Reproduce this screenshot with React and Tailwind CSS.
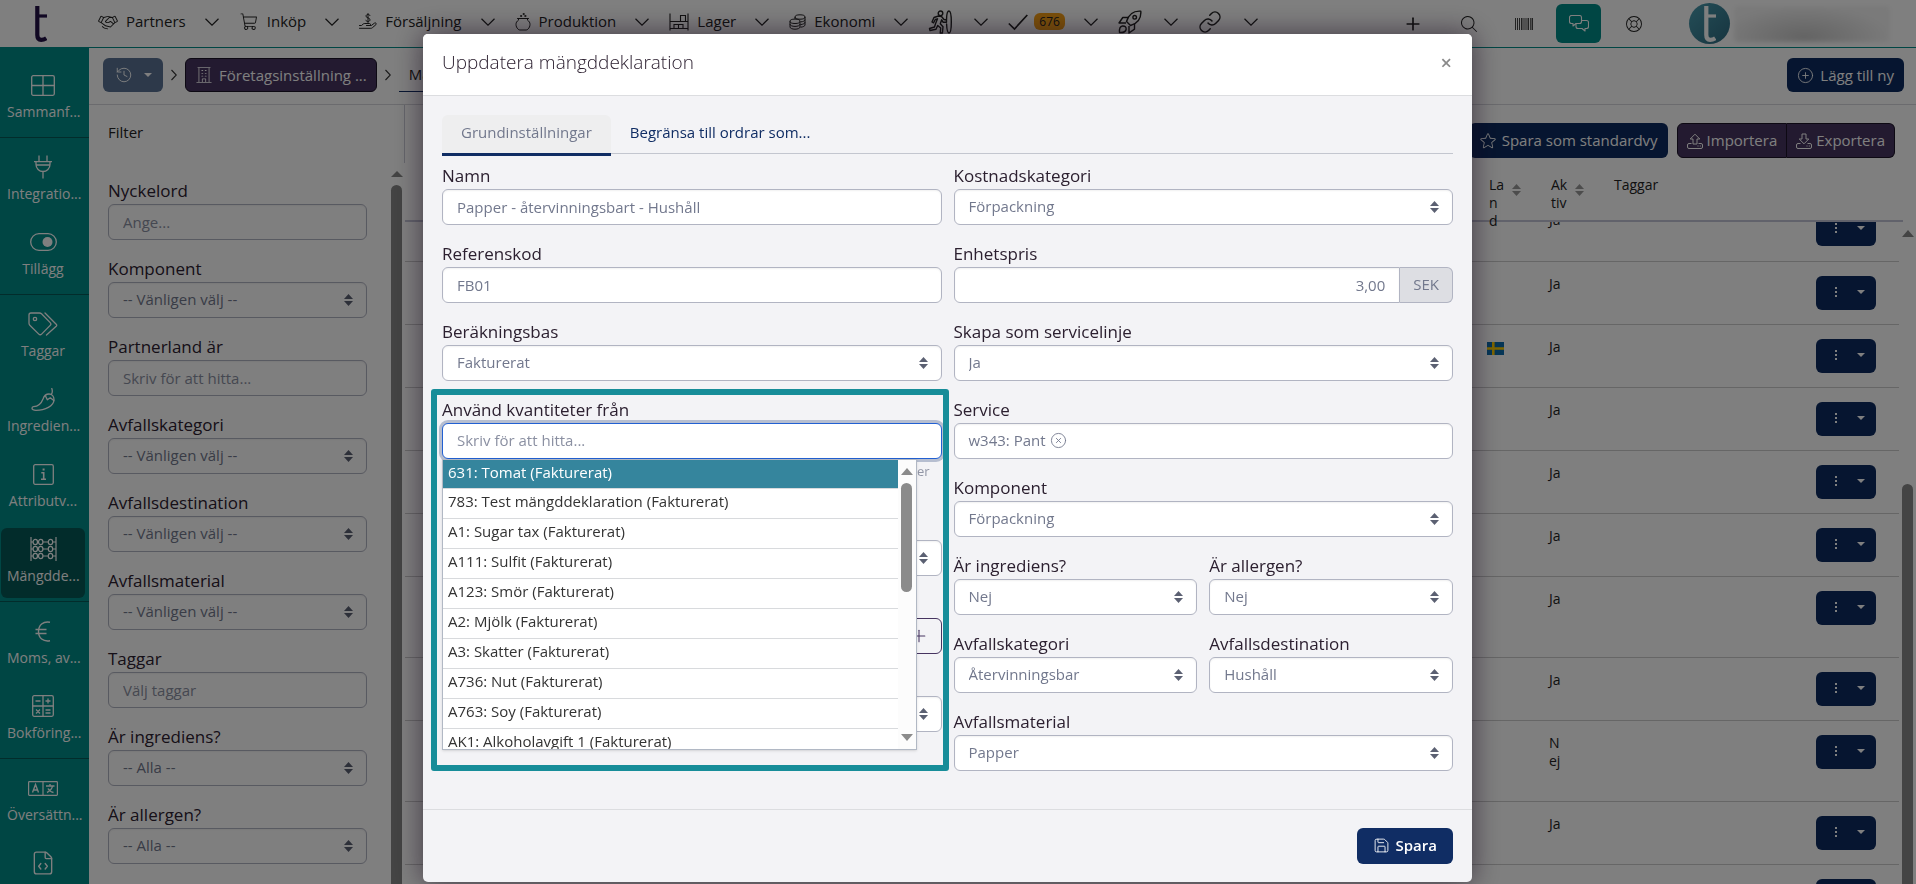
import React from 'react'
import {
    PiHandshakeLight, PiShoppingCartLight, PiBuildingLight, PiStarLight,
    PiLifebuoyLight, PiMagnifyingGlassLight,
} from 'react-icons/pi'
import { Link, Save, CirclePlus, CircleX, FileCode, Plus, History } from 'lucide-react'
import clsx from 'clsx'

const navItems = [
    { label: 'Partners', icon: <PiHandshakeLight className="w-5 h-5" /> },
    { label: 'Inköp', icon: <PiShoppingCartLight className="w-5 h-5" /> },
    { label: 'Försäljning', icon: <HandDollarIcon /> },
    { label: 'Produktion', icon: <PotIcon /> },
    { label: 'Lager', icon: <ShelfIcon /> },
    { label: 'Ekonomi', icon: <CoinsIcon /> },
    { name: 'CRM', icon: <SurferIcon /> },
    { name: 'Uppgifter', icon: <CheckIcon />, badge: '676' },
    { name: 'Start', icon: <RocketIcon /> },
    { name: 'Länkar', icon: <Link className="w-6 h-6" strokeWidth={1.5} /> },
]

const sideGroups = [
    [{ label: 'Sammanf...', icon: <GridIcon /> }],
    [
        { label: 'Integratio...', icon: <PlugIcon /> },
        { label: 'Tillägg', icon: <ToggleIcon /> },
    ],
    [
        { label: 'Taggar', icon: <TagsIcon /> },
        { label: 'Ingredien...', icon: <PepperIcon /> },
        { label: 'Attributv...', icon: <InfoIcon /> },
        { label: 'Mängdde...', icon: <AbacusIcon />, active: true },
    ],
    [
        { label: 'Moms, av...', icon: <EuroIcon /> },
        { label: 'Bokföring...', icon: <CalcIcon /> },
    ],
    [
        { label: 'Översättn...', icon: <TranslateIcon /> },
        { name: 'Kod', icon: <FileCode className="w-[26px] h-[26px]" strokeWidth={1.25} /> },
    ],
]

const filters = [
    { label: 'Nyckelord', placeholder: 'Ange...' },
    { label: 'Komponent', value: '-- Vänligen välj --' },
    { label: 'Partnerland är', placeholder: 'Skriv för att hitta...' },
    { label: 'Avfallskategori', value: '-- Vänligen välj --' },
    { label: 'Avfallsdestination', value: '-- Vänligen välj --' },
    { label: 'Avfallsmaterial', value: '-- Vänligen välj --' },
    { label: 'Taggar', placeholder: 'Välj taggar' },
    { label: 'Är ingrediens?', value: '-- Alla --' },
    { label: 'Är allergen?', value: '-- Alla --' },
]

const rows = [
    { active: 'Ja' },
    { active: 'Ja' },
    { active: 'Ja', flag: true },
    { active: 'Ja' },
    { active: 'Ja' },
    { active: 'Ja' },
    { active: 'Ja', tall: true },
    { active: 'Ja' },
    { active: 'Nej', tall: true },
    { active: 'Ja' },
    { active: '' },
]

const options = [
    '631: Tomat (Fakturerat)',
    '783: Test mängddeklaration (Fakturerat)',
    'A1: Sugar tax (Fakturerat)',
    'A111: Sulfit (Fakturerat)',
    'A123: Smör (Fakturerat)',
    'A2: Mjölk (Fakturerat)',
    'A3: Skatter (Fakturerat)',
    'A736: Nut (Fakturerat)',
    'A763: Soy (Fakturerat)',
    'AK1: Alkoholavgift 1 (Fakturerat)',
]

/* ---------- Icons ---------- */

function HandDollarIcon() {
    return (
        <svg className="w-[18px] h-[18px]" viewBox="0 0 18 18" fill="none" stroke="currentColor" strokeWidth="1" strokeLinecap="round" strokeLinejoin="round">
            <path d="M9 0.5v9M11 2.6C10.6 1.8 9.9 1.5 9 1.5c-1.200 0-2 .6-2 1.600 0 2.300 4 1.200 4 3.700 0 1-.9 1.700-2 1.700-1 0-1.800-.4-2.200-1.300" />
            <path d="M.5 12.500h2L4.200 11c.5-.4 1-.5 1.600-.5h4.700c1.300 0 1.300 2 0 2H7.500M10.500 12.500h1.800l3.200-2.400c1.200-.8 2.400.6 1.400 1.600l-3.500 3c-.5.5-1 .6-1.600.6H.5" />
        </svg>
    )
}

function PotIcon() {
    return (
        <svg className="w-4 h-[18px]" viewBox="0 0 16 18" fill="none" stroke="currentColor" strokeWidth="1" strokeLinecap="round">
            <path d="M2.500 5.500h11M3.500 5.500v1.700C1.700 8.300 1 9.700 1 11.500c0 1.800.8 3.500 2 4.500.5.700 1 1 1.800 1h6.400c.8 0 1.300-.3 1.800-1 1.200-1 2-2.700 2-4.500 0-1.800-.7-3.200-2.500-4.300V5.500" />
            <circle cx="6" cy="3" r=".6" />
            <circle cx="8.500" cy="1" r=".6" />
            <circle cx="10.200" cy="3" r=".6" />
        </svg>
    )
}

function ShelfIcon() {
    return (
        <svg className="w-5 h-[18px]" viewBox="0 0 20 18" fill="none" stroke="currentColor" strokeWidth="1.1">
            <path d="M1 .5v17M19 .5v17M1 8.500h18M1 15.500h18M11.500 8.500v-6h5v6M5 15.500v-4h9v4M9.500 11.500v4" />
        </svg>
    )
}

function CoinsIcon() {
    return (
        <svg className="w-[17px] h-4" viewBox="0 0 17 16" fill="none" stroke="currentColor" strokeWidth="1">
            <ellipse cx="11" cy="3" rx="5" ry="2.200" />
            <path d="M6 3v2M16 3v8c0 1-1.800 2-4.500 2.200M16 5.700c0 1.100-1.800 2-4.300 2.200M16 8.300c0 1.100-1.800 2-4.500 2.300" />
            <ellipse cx="6" cy="7.300" rx="5" ry="2.200" />
            <path d="M1 7.300v5.700c0 1.200 2.200 2.200 5 2.200s5-1 5-2.200V7.300M1 10.200c0 1.200 2.200 2.200 5 2.200s5-1 5-2.200" />
        </svg>
    )
}

function SurferIcon() {
    return (
        <svg className="w-6 h-6" viewBox="0 0 24 24" fill="none" stroke="currentColor" strokeWidth="1.400" strokeLinecap="round" strokeLinejoin="round">
            <circle cx="12.500" cy="3.300" r="2.300" />
            <path d="M10.500 6 6 7.500 4 12l1.500.8L7.300 9.500l2.200-.7-2 5L6.500 17 1.500 18.500l.5 2 6-1.300 1.700-3.700 3 2.500-.5 5h2.200l.6-6.200-2.700-3 1.400-4 1.500 2.500h3.300V10l-2.500-.5L13.500 6.500z" />
            <path d="M18.500 9.500C18.600 4.500 19.700 1 21 1c1.500 0 2.300 5 2.300 11s-.8 11-2.300 11c-1.300 0-2.200-4-2.400-9" />
        </svg>
    )
}

function RocketIcon() {
    return (
        <svg className="w-6 h-6" viewBox="0 0 24 24" fill="none" stroke="currentColor" strokeWidth="1.400" strokeLinejoin="round">
            <path d="M8.500 11.500C10.500 5 15 .6 22.800 1.200 23.400 9 19 13.500 12.500 15.500z" />
            <circle cx="16.700" cy="7.300" r="1.800" />
            <path d="M10.200 7.500H4.800L1 13h7M16.500 13.800v5.400L11 23v-7" />
            <path d="M1.500 22.500c-.3-4 .7-6.200 3-6.500 2.500-.2 4 1.300 3.600 3.500-.4 2.300-2.600 3.300-6.600 3z" />
        </svg>
    )
}

function CheckIcon() {
    return (
        <svg className="w-5 h-5" viewBox="0 0 20 20" fill="none" stroke="currentColor" strokeWidth="1.700">
            <path d="M.8 11.500 6.500 17 19.300 3" />
        </svg>
    )
}

function BarcodeIcon() {
    return (
        <svg className="w-[18px] h-3" viewBox="0 0 18 12" fill="#444">
            <path d="M0 0h1v12H0zM2 0h1v12H2zM4 0h1v12H4zM6 0h1.500v12H6zM8.500 0h1v12h-1zM10.500 0h1v12h-1zM12.500 0h1.500v12h-1.500zM15 0h.8v12H15zM16.500 0H18v12h-1.500z" />
        </svg>
    )
}

function ChatIcon() {
    return (
        <svg className="w-5 h-[17px]" viewBox="0 0 20 17" fill="none" stroke="currentColor" strokeWidth="1.100" strokeLinejoin="round">
            <path d="M7 8.500 4 11V8.500H2.500a2 2 0 0 1-2-2v-4a2 2 0 0 1 2-2h8a2 2 0 0 1 2 2v4a2 2 0 0 1-2 2z" />
            <path d="M12.500 5.500h5a2 2 0 0 1 2 2v4a2 2 0 0 1-2 2H16V16l-3-2.500H9a2 2 0 0 1-2-2v-3" />
        </svg>
    )
}

function GridIcon() {
    return (
        <svg className="w-6 h-[21px]" viewBox="0 0 24 21" fill="none" stroke="currentColor" strokeWidth="1.300">
            <rect x=".7" y=".7" width="22.600" height="19.600" rx="1.500" />
            <path d="M12 .7v19.600M.7 10.500h22.600" />
        </svg>
    )
}

function PlugIcon() {
    return (
        <svg className="w-[18px] h-6" viewBox="0 0 18 24" fill="none" stroke="currentColor" strokeWidth="1.300">
            <path d="M5 .5v6M13 .5v6M0 6.700h18M2 6.700v2.800a7 7 0 0 0 14 0V6.700M2 10h14M9 16.500V23.500" />
        </svg>
    )
}

function ToggleIcon() {
    return (
        <svg className="w-[27px] h-[18px]" viewBox="0 0 27 18" fill="none" stroke="currentColor" strokeWidth="1.300">
            <rect x=".7" y=".7" width="25.600" height="16.600" rx="8.300" />
            <circle cx="17.500" cy="9" r="5" fill="currentColor" stroke="none" />
        </svg>
    )
}

function TagsIcon() {
    return (
        <svg className="w-[30px] h-6" viewBox="0 0 30 24" fill="none" stroke="currentColor" strokeWidth="1.300" strokeLinecap="round">
            <path d="M1 3a2 2 0 0 1 2-2h8.500c.8 0 1.500.3 2 .8l8.700 8.800c.8.8.8 2 0 2.800l-8.600 8.700c-.8.8-2 .8-2.800 0L1.800 13.300c-.5-.5-.8-1.200-.8-2z" />
            <path d="M17 1l11.200 11.200c.6.6.6 1.400 0 2L18.500 23" />
            <circle cx="7" cy="7" r="1.700" />
        </svg>
    )
}

function PepperIcon() {
    return (
        <svg className="w-6 h-[23px]" viewBox="0 0 24 23" fill="none" stroke="currentColor" strokeWidth="1.300" strokeLinejoin="round" strokeLinecap="round">
            <path d="M1 20.300c0-1 .6-1.500 1.500-1.600 5.500-.4 8-3.700 9.500-7.700C13 8 15 6 18 6s5 2.500 5 5.500c0 6.500-9 10.800-18 10.800-2.500 0-4-.8-4-2z" />
            <path d="M20.500 6.200c1-1.700 1-3.700.3-5.700M14.500 8l1.800 3.800 3-2 3.500 2.700" />
        </svg>
    )
}

function InfoIcon() {
    return (
        <svg className="w-[21px] h-[21px]" viewBox="0 0 21 21" fill="none" stroke="currentColor" strokeWidth="1.300">
            <rect x=".7" y=".7" width="19.600" height="19.600" rx="1.500" />
            <path d="M8.300 8.700h2.400v6.500M8 15.300h5" strokeWidth="1.600" />
            <path d="M9.600 4.500h2v2h-2z" fill="currentColor" stroke="none" />
        </svg>
    )
}

function AbacusIcon() {
    return (
        <svg className="w-[27px] h-6" viewBox="0 0 27 24" fill="none" stroke="currentColor" strokeWidth="1.200">
            <path d="M1 0v24M26 0v24M1 5h2M13 5h5M23 5h3M1 12h2M13 12h5M23 12h3M1 19h2M13 19h5M23 19h3" />
            {[5, 12, 19].map((y) => [5.3, 10.7, 20.5].map((x) => (
                <ellipse key={`${x}-${y}`} cx={x} cy={y} rx="2.200" ry="2.600" />
            )))}
        </svg>
    )
}

function EuroIcon() {
    return (
        <svg className="w-4 h-[21px]" viewBox="0 0 16 21" fill="none" stroke="currentColor" strokeWidth="1.400">
            <path d="M15 1.200C8 0 3.500 4 3.500 10.500S8 21 15 19.800M.5 8.500h11M.5 12.500h11" />
        </svg>
    )
}

function CalcIcon() {
    return (
        <svg className="w-[22px] h-[22px]" viewBox="0 0 22 22" fill="none" stroke="currentColor" strokeWidth="1.300">
            <rect x=".7" y=".7" width="20.600" height="20.600" rx="1.500" />
            <path d="M11 .7v20.600M.7 11h20.600M3.500 6h5M13.500 6h5M16 3.500v5M4 14.500l4 4M8 14.500l-4 4M13.500 15h5M13.500 18h5" />
        </svg>
    )
}

function TranslateIcon() {
    return (
        <svg className="w-[30px] h-[15px]" viewBox="0 0 30 15" fill="none" stroke="currentColor" strokeWidth="1.200">
            <rect x=".6" y=".6" width="28.800" height="13.800" rx=".8" />
            <path d="M15 .6v13.800" />
            <path d="M4.500 11.500 7.500 3.500l3 8M5.500 9h4M18 5h8.500M22 3v2M19 11.500c3-1.500 5-3.500 5.500-6.500M20 7.500c1 2 3 3.500 5.500 4" strokeWidth="1.400" />
        </svg>
    )
}

function TrayIcon({ down }) {
    return (
        <svg className="w-4 h-4" viewBox="0 0 16 16" fill="none" stroke="currentColor" strokeWidth="1" strokeLinejoin="round">
            {down
                ? <path d="M6 1h4v5h2.800L8 10.800 3.200 6H6z" />
                : <path d="M6 11h4V6h2.800L8 1.200 3.200 6H6z" />}
            <path d="M4.500 10.500H2a1.500 1.500 0 0 0-1.500 1.500v2A1.500 1.500 0 0 0 2 15.500h12a1.500 1.500 0 0 0 1.500-1.500v-2a1.500 1.500 0 0 0-1.500-1.500h-2.500M10.500 13h1M12.800 13h1" />
        </svg>
    )
}

function Triangle({ up, className }) {
    return (
        <svg className={className} viewBox="0 0 12 6" fill="currentColor" preserveAspectRatio="none">
            <path d={up ? 'M0 6 6 0l6 6z' : 'M0 0h12L6 6z'} />
        </svg>
    )
}

function SortArrows({ className }) {
    return (
        <span className={clsx('flex flex-col gap-[2px]', className)}>
            <Triangle up className="w-[9px] h-[5px]" />
            <Triangle className="w-[9px] h-[5px]" />
        </span>
    )
}

function Chevron({ right }) {
    return right
        ? <svg className="w-[6px] h-3 shrink-0" viewBox="0 0 6 12" fill="none" stroke="#333" strokeWidth="1.100"><path d="M.5 1 5.300 6 .5 11" /></svg>
        : <svg className="w-[14px] h-2 shrink-0" viewBox="0 0 14 8" fill="none" stroke="currentColor" strokeWidth="1.200"><path d="M.5.8 7 7.200 13.500.8" /></svg>
}

function LogoMark({ className }) {
    return (
        <svg className={className} viewBox="0 0 12 36" fill="none" stroke="currentColor">
            <path d="M2.300 0v29c0 3.300 1.200 4.800 3.800 4.800 2 0 3.600-.5 5.200-1.600" strokeWidth="4.200" />
            <path d="M3 10h9" strokeWidth="3.200" />
        </svg>
    )
}

/* ---------- Form parts ---------- */

const box = 'w-full h-9 rounded-md border border-[#b1b4c2] bg-white px-[14px] text-[15px] text-[#72788d] placeholder-[#8b90a2] shadow-[inset_0_1px_2px_rgba(0,0,0,0.06)]'

function SelectBox({ id, value, label }) {
    return (
        <div className="relative">
            <select id={id} aria-label={label} defaultValue={value} className={clsx(box, 'block appearance-none outline-none pb-[2px]')}>
                <option>{value}</option>
            </select>
            <SortArrows className="absolute right-[14px] top-3 text-[#5b6072] pointer-events-none" />
        </div>
    )
}

function Field({ id, label, value, placeholder, input, children }) {
    return (
        <div className="w-full min-w-0">
            <label htmlFor={id} className="block mb-[2px] text-[17px] leading-[22px] text-[#2c2030]">{label}</label>
            {children || (input || placeholder
                ? <input id={id} type="text" defaultValue={value} placeholder={placeholder} className={clsx(box, 'block outline-none')} />
                : <SelectBox id={id} value={value} />)}
        </div>
    )
}

/* ---------- Page ---------- */

function TopBar() {
    return (
        <header className="h-12 shrink-0 flex items-center bg-white border-b border-[#008c88] text-[#222]">
            <a href="#" aria-label="Start" className="w-[89px] flex justify-center text-[#231046]">
                <LogoMark className="w-3 h-9 ml-[-8px]" />
            </a>
            <nav className="flex items-center gap-5 pl-[9px] h-full pb-1">
                {navItems.map((item) => (
                    <button key={item.label || item.name} aria-label={item.name} className="flex items-center">
                        {item.icon}
                        {item.label && <span className="ml-2 text-[15px]">{item.label}</span>}
                        {item.badge && <span className="ml-[6px] px-[5px] rounded-md bg-[#f7a014] text-xs leading-[17px]">{item.badge}</span>}
                        <span className={item.label || item.badge ? 'ml-[19px]' : 'ml-[22px]'}><Chevron /></span>
                    </button>
                ))}
            </nav>
            <div className="ml-auto flex items-center h-full pr-[26px]">
                <button aria-label="Lägg till" className="mr-9"><Plus className="w-5 h-5" strokeWidth={2} /></button>
                <button aria-label="Sök" className="mr-9"><PiMagnifyingGlassLight className="w-5 h-5" /></button>
                <button aria-label="Streckkod" className="mr-[23px]"><BarcodeIcon /></button>
                <button aria-label="Chatt" className="w-[45px] h-[39px] flex items-center justify-center rounded-md bg-[#008c88] text-white mr-[23px]"><ChatIcon /></button>
                <button aria-label="Hjälp" className="mr-[45px]"><PiLifebuoyLight className="w-5 h-5" /></button>
                <span className="w-[41px] h-[41px] rounded-full bg-gradient-to-br from-[#4a9db0] to-[#2d6a80] flex items-center justify-center text-white">
                    <LogoMark className="w-3 h-9" />
                </span>
                <span className="w-[156px] h-9 ml-1 rounded bg-[radial-gradient(ellipse_at_45%_85%,#c8c8c8,#f4f4f4_70%)] blur-[2px]" />
            </div>
        </header>
    )
}

function SideNav() {
    return (
        <aside className="w-[89px] shrink-0 bg-[#008c88] text-white pt-2 overflow-hidden">
            {sideGroups.map((group, i) => (
                <div key={i} className="pt-2 pb-[3px] pl-px pr-1 flex flex-col gap-[5px] border-b border-[#045856]">
                    {group.map((item) => (
                        <a key={item.label || item.name} href="#" aria-label={item.name} className={clsx('h-[70px] shrink-0 rounded-md flex flex-col items-center', item.active && 'bg-[#045856]')}>
                            <span className="h-[42px] flex items-center">{item.icon}</span>
                            {item.label && <span className="w-[72px] text-center text-[14px] leading-3 whitespace-nowrap">{item.label}</span>}
                        </a>
                    ))}
                </div>
            ))}
        </aside>
    )
}

function FilterPanel() {
    return (
        <section className="w-[316px] shrink-0 flex flex-col overflow-hidden">
            <div className="h-[58px] shrink-0 pl-[19px] pt-4 border-r border-[#c9cbd6]">
                <h2 className="text-[15px] text-[#222]">Filter</h2>
            </div>
            <div className="flex-1 flex min-h-0 pt-2">
                <div className="flex-1 flex flex-col gap-[18px] pl-[19px] pt-[9px] overflow-hidden">
                    {filters.map((f) => <div key={f.label} className="shrink-0"><Field id={`filter-${f.label}`} {...f} /></div>)}
                </div>
                <div className="w-[17px] ml-[21px] flex flex-col items-center gap-2 text-[#888]">
                    <Triangle up className="w-3 h-[6px] shrink-0" />
                    <div className="w-[11px] flex-1 rounded-t-md bg-[#888]" />
                </div>
            </div>
        </section>
    )
}

const navy = 'bg-[#0d2b60] text-white rounded-md'
const purple = 'bg-[#463460] text-white border border-[#1a1226]'

function TableCols() {
    return (
        <colgroup>
            <col />
            <col className="w-[62px]" />
            <col className="w-[63px]" />
            <col className="w-[206px]" />
            <col className="w-[83px]" />
        </colgroup>
    )
}

function Declarations() {
    return (
        <section className="flex-1 min-w-0 flex flex-col">
            <div className="flex justify-end gap-[9px] pt-[18px] pr-[21px] text-[15px]">
                <button className={clsx(navy, 'h-[35px] px-[10px] flex items-center gap-[5px]')}><PiStarLight className="w-[18px] h-[18px]" />Spara som standardvy</button>
                <div className="flex">
                    <button className={clsx(purple, 'h-[35px] px-[9px] rounded-l-md flex items-center gap-1')}><TrayIcon />Importera</button>
                    <button className={clsx(purple, 'h-[35px] px-[9px] rounded-r-md border-l-0 flex items-center gap-1')}><TrayIcon down />Exportera</button>
                </div>
            </div>
            <div className="mt-[18px] mr-[13px] h-[46px] border-b-2 border-[#c3c5d6]">
                <table className="w-full table-fixed text-[14px] leading-[18px] text-[#222]">
                    <TableCols />
                    <thead>
                        <tr className="align-top text-left">
                            <th></th>
                            <th className="font-normal"><div className="flex"><span className="w-4 break-all">Land</span><SortArrows className="ml-[7px] mt-2 text-[#999]" /></div></th>
                            <th className="font-normal"><div className="flex"><span className="w-[18px] break-all">Aktiv</span><SortArrows className="ml-[6px] mt-2 text-[#999]" /></div></th>
                            <th className="font-normal">Taggar</th>
                            <th></th>
                        </tr>
                    </thead>
                </table>
            </div>
            <div className="flex-1 min-h-0 flex overflow-hidden">
                <div className="flex-1 overflow-hidden">
                    <table className="w-full table-fixed -mt-6 text-[14px] leading-[18px] text-[#222]">
                        <TableCols />
                        <tbody>
                            {rows.map((row, i) => (
                                <tr key={i} className={clsx('align-top border-b border-[#ccc]', row.tall ? 'h-[81px]' : 'h-[63px]')}>
                                    <td></td>
                                    <td className="pt-[17px] pl-[2px]">{row.flag && <Flag />}</td>
                                    <td className="pt-[13px] pl-[2px]"><span className="block w-4 break-all">{row.active}</span></td>
                                    <td></td>
                                    <td className="pt-[14px]">
                                        <button aria-label="Åtgärder" className={clsx(navy, 'w-[60px] h-[34px] flex items-center justify-center gap-5 pl-2 pb-[2px]')}>
                                            <svg className="w-[2px] h-[10px]" viewBox="0 0 2 10" fill="currentColor"><path d="M0 0h2v2H0zM0 4h2v2H0zM0 8h2v2H0z" /></svg>
                                            <Triangle className="w-2 h-1" />
                                        </button>
                                    </td>
                                </tr>
                            ))}
                        </tbody>
                    </table>
                </div>
                <div className="w-[17px] flex flex-col items-center pt-2 text-[#888]">
                    <Triangle up className="w-3 h-[7px]" />
                    <div className="w-[11px] flex-1 mt-[247px] rounded-t-md bg-[#888]" />
                </div>
            </div>
        </section>
    )
}

function Flag() {
    return (
        <svg className="w-[17px] h-[13px]" viewBox="0 0 17 13">
            <path fill="#0b6cae" d="M0 0h17v13H0z" />
            <path fill="#fc0" d="M5 0h2.600v13H5zM0 5.200h17v2.600H0z" />
        </svg>
    )
}

function QuantityDropdown() {
    return (
        <div className="absolute left-0 right-[25px] top-full z-10 h-[291px] flex border border-[#b1b8c4] bg-white shadow-sm overflow-hidden">
            <ul role="listbox" aria-label="Använd kvantiteter från" className="flex-1">
                {options.map((o, i) => (
                    <li
                        key={o}
                        role="option"
                        aria-selected={i === 0}
                        className={clsx('pl-[5px] text-[15px] leading-[25px] border-b border-[#d8dadd] whitespace-nowrap', i === 0 ? 'h-[29px] bg-[#35859d] text-white' : 'h-[30px] text-[#333]')}
                    >
                        {o}
                    </li>
                ))}
            </ul>
            <div className="w-[18px] flex flex-col items-center bg-[#fcfcfc] py-2 text-[#8b8b8b]">
                <Triangle up className="w-3 h-[7px]" />
                <div className="w-[11px] h-[109px] mt-2 rounded-full bg-[#8b8b8b]" />
                <Triangle className="w-3 h-[7px] mt-auto" />
            </div>
        </div>
    )
}

function UpdateDialog() {
    return (
        <div className="fixed inset-0 z-20 bg-black/50 flex justify-center items-start pt-[34px] pr-[21px]">
            <div role="dialog" aria-labelledby="dialog-title" className="w-full max-w-[1049px] rounded-[5px] bg-[#f3f3f6] shadow-[0_0_28px_rgba(20,5,25,0.6)]">
                <div className="h-[62px] flex items-center justify-between pl-[19px] pr-5 pb-1 bg-white rounded-t-[5px] border-b border-[#dcdde0]">
                    <h1 id="dialog-title" className="text-[19px] font-light text-[#2c2030]">Uppdatera mängddeklaration</h1>
                    <button aria-label="Stäng" className="text-[#8a8a8a] text-xl leading-5 font-semibold">×</button>
                </div>
                <div className="px-[19px] pt-[19px] pb-[38px]">
                    <div role="tablist" className="flex border-b border-[#c3c6cf] h-[39px]">
                        <button role="tab" aria-selected="true" className="h-[41px] px-[19px] pb-1 text-[15px] text-[#72788d] bg-[#eeeeef] border-b-[3px] border-[#102d64] rounded-t-md">Grundinställningar</button>
                        <button role="tab" aria-selected="false" className="px-[19px] pb-1 text-[15px] text-[#102d64]">Begränsa till ordrar som...</button>
                    </div>
                    <div className="flex gap-3 mt-[11px]">
                        <div className="flex-1 min-w-0 flex flex-col gap-[18px]">
                            <Field id="name" label="Namn" value="Papper - återvinningsbart - Hushåll" input />
                            <Field id="ref" label="Referenskod" value="FB01" input />
                            <Field id="basis" label="Beräkningsbas" value="Fakturerat" />
                            <div className="relative">
                                <Field id="quantities" label="Använd kvantiteter från">
                                    <div className="relative">
                                        <input
                                            id="quantities"
                                            type="text"
                                            placeholder="Skriv för att hitta..."
                                            className="block w-full h-9 rounded-md border border-[#2260d2] bg-white px-[14px] pb-[2px] text-[15px] text-[#72788d] placeholder-[#8b90a2] ring-[3px] ring-[#b6bed0] outline-none"
                                        />
                                        <QuantityDropdown />
                                    </div>
                                </Field>
                                <p className="h-[38px] pt-1 pr-3 text-right text-[13px] leading-4 text-[#9296a6]">kvantiteter</p>
                                <div className="pt-[43px] flex flex-col gap-[42px]">
                                    <SelectBox label="Enhet" value="" />
                                    <button aria-label="Ny rad" className="h-9 rounded-md border border-[#463460] text-[#463460] flex items-center justify-end pr-3">
                                        <Plus className="w-5 h-5" strokeWidth={1.25} />
                                    </button>
                                    <SelectBox label="Typ" value="" />
                                </div>
                                <div className="absolute -left-[11px] -right-[7px] -top-[10px] -bottom-[39px] border-[6px] border-[#178d99] rounded-[3px] pointer-events-none" />
                            </div>
                        </div>
                        <div className="flex-1 min-w-0 flex flex-col gap-[18px]">
                            <Field id="cost" label="Kostnadskategori" value="Förpackning" />
                            <Field id="price" label="Enhetspris">
                                <div className="flex">
                                    <input id="price" type="text" defaultValue="3,00" className={clsx(box, 'flex-1 min-w-0 rounded-r-none text-right outline-none')} />
                                    <span className="h-9 px-[13px] pb-[2px] flex items-center border border-l-0 border-[#b1b4c2] rounded-r-md bg-[#dddee3] text-[15px] text-[#72788d]">SEK</span>
                                </div>
                            </Field>
                            <Field id="line" label="Skapa som servicelinje" value="Ja" />
                            <Field id="service" label="Service">
                                <div className={clsx(box, 'flex items-center gap-1 pb-[2px]')}>
                                    w343: Pant
                                    <button id="service" aria-label="Ta bort"><CircleX className="w-[17px] h-[17px]" strokeWidth={1.25} /></button>
                                </div>
                            </Field>
                            <Field id="component" label="Komponent" value="Förpackning" />
                            <div className="flex gap-3">
                                <Field id="ingredient" label="Är ingrediens?" value="Nej" />
                                <Field id="allergen" label="Är allergen?" value="Nej" />
                            </div>
                            <div className="flex gap-3">
                                <Field id="category" label="Avfallskategori" value="Återvinningsbar" />
                                <Field id="destination" label="Avfallsdestination" value="Hushåll" />
                            </div>
                            <Field id="material" label="Avfallsmaterial" value="Papper" />
                        </div>
                    </div>
                </div>
                <div className="h-[73px] flex items-center justify-end px-[19px] border-t border-[#dcdde0]">
                    <button className="h-9 px-4 pb-[2px] flex items-center gap-[6px] rounded-md bg-[#102d64] text-white text-[15px] font-semibold">
                        <Save className="w-[17px] h-[17px]" strokeWidth={1.25} />Spara
                    </button>
                </div>
            </div>
        </div>
    )
}

export default function App() {
    return (
        <div className="h-screen flex flex-col overflow-hidden bg-white font-['Open_Sans',sans-serif]">
            <TopBar />
            <div className="flex-1 min-h-0 flex">
                <SideNav />
                <main className="flex-1 min-w-0 flex flex-col">
                    <div className="h-[57px] shrink-0 flex items-center gap-2 pl-[14px] pr-3 pb-[2px] border-b border-[#d6d7dc] text-[15px]">
                        <button aria-label="Historik" className="w-[60px] h-[34px] rounded-md bg-[#5a7395] text-white flex items-center justify-center gap-[11px]">
                            <History className="w-[18px] h-[18px]" strokeWidth={1.25} />
                            <Triangle className="w-2 h-1" />
                        </button>
                        <Chevron right />
                        <a href="#" className={clsx(purple, 'h-[34px] px-[9px] rounded-md flex items-center gap-[6px]')}>
                            <PiBuildingLight className="w-[18px] h-[18px]" />Företagsinställning ...
                        </a>
                        <Chevron right />
                        <span className="h-[34px] px-[10px] flex items-center border-b border-[#102d64] text-[#222]">Mängddeklaration</span>
                        <button className={clsx(navy, 'ml-auto h-[34px] px-[10px] flex items-center gap-[6px]')}>
                            <CirclePlus className="w-[17px] h-[17px]" strokeWidth={1.25} />Lägg till ny
                        </button>
                    </div>
                    <div className="flex-1 min-h-0 flex">
                        <FilterPanel />
                        <Declarations />
                    </div>
                </main>
            </div>
            <UpdateDialog />
        </div>
    )
}
